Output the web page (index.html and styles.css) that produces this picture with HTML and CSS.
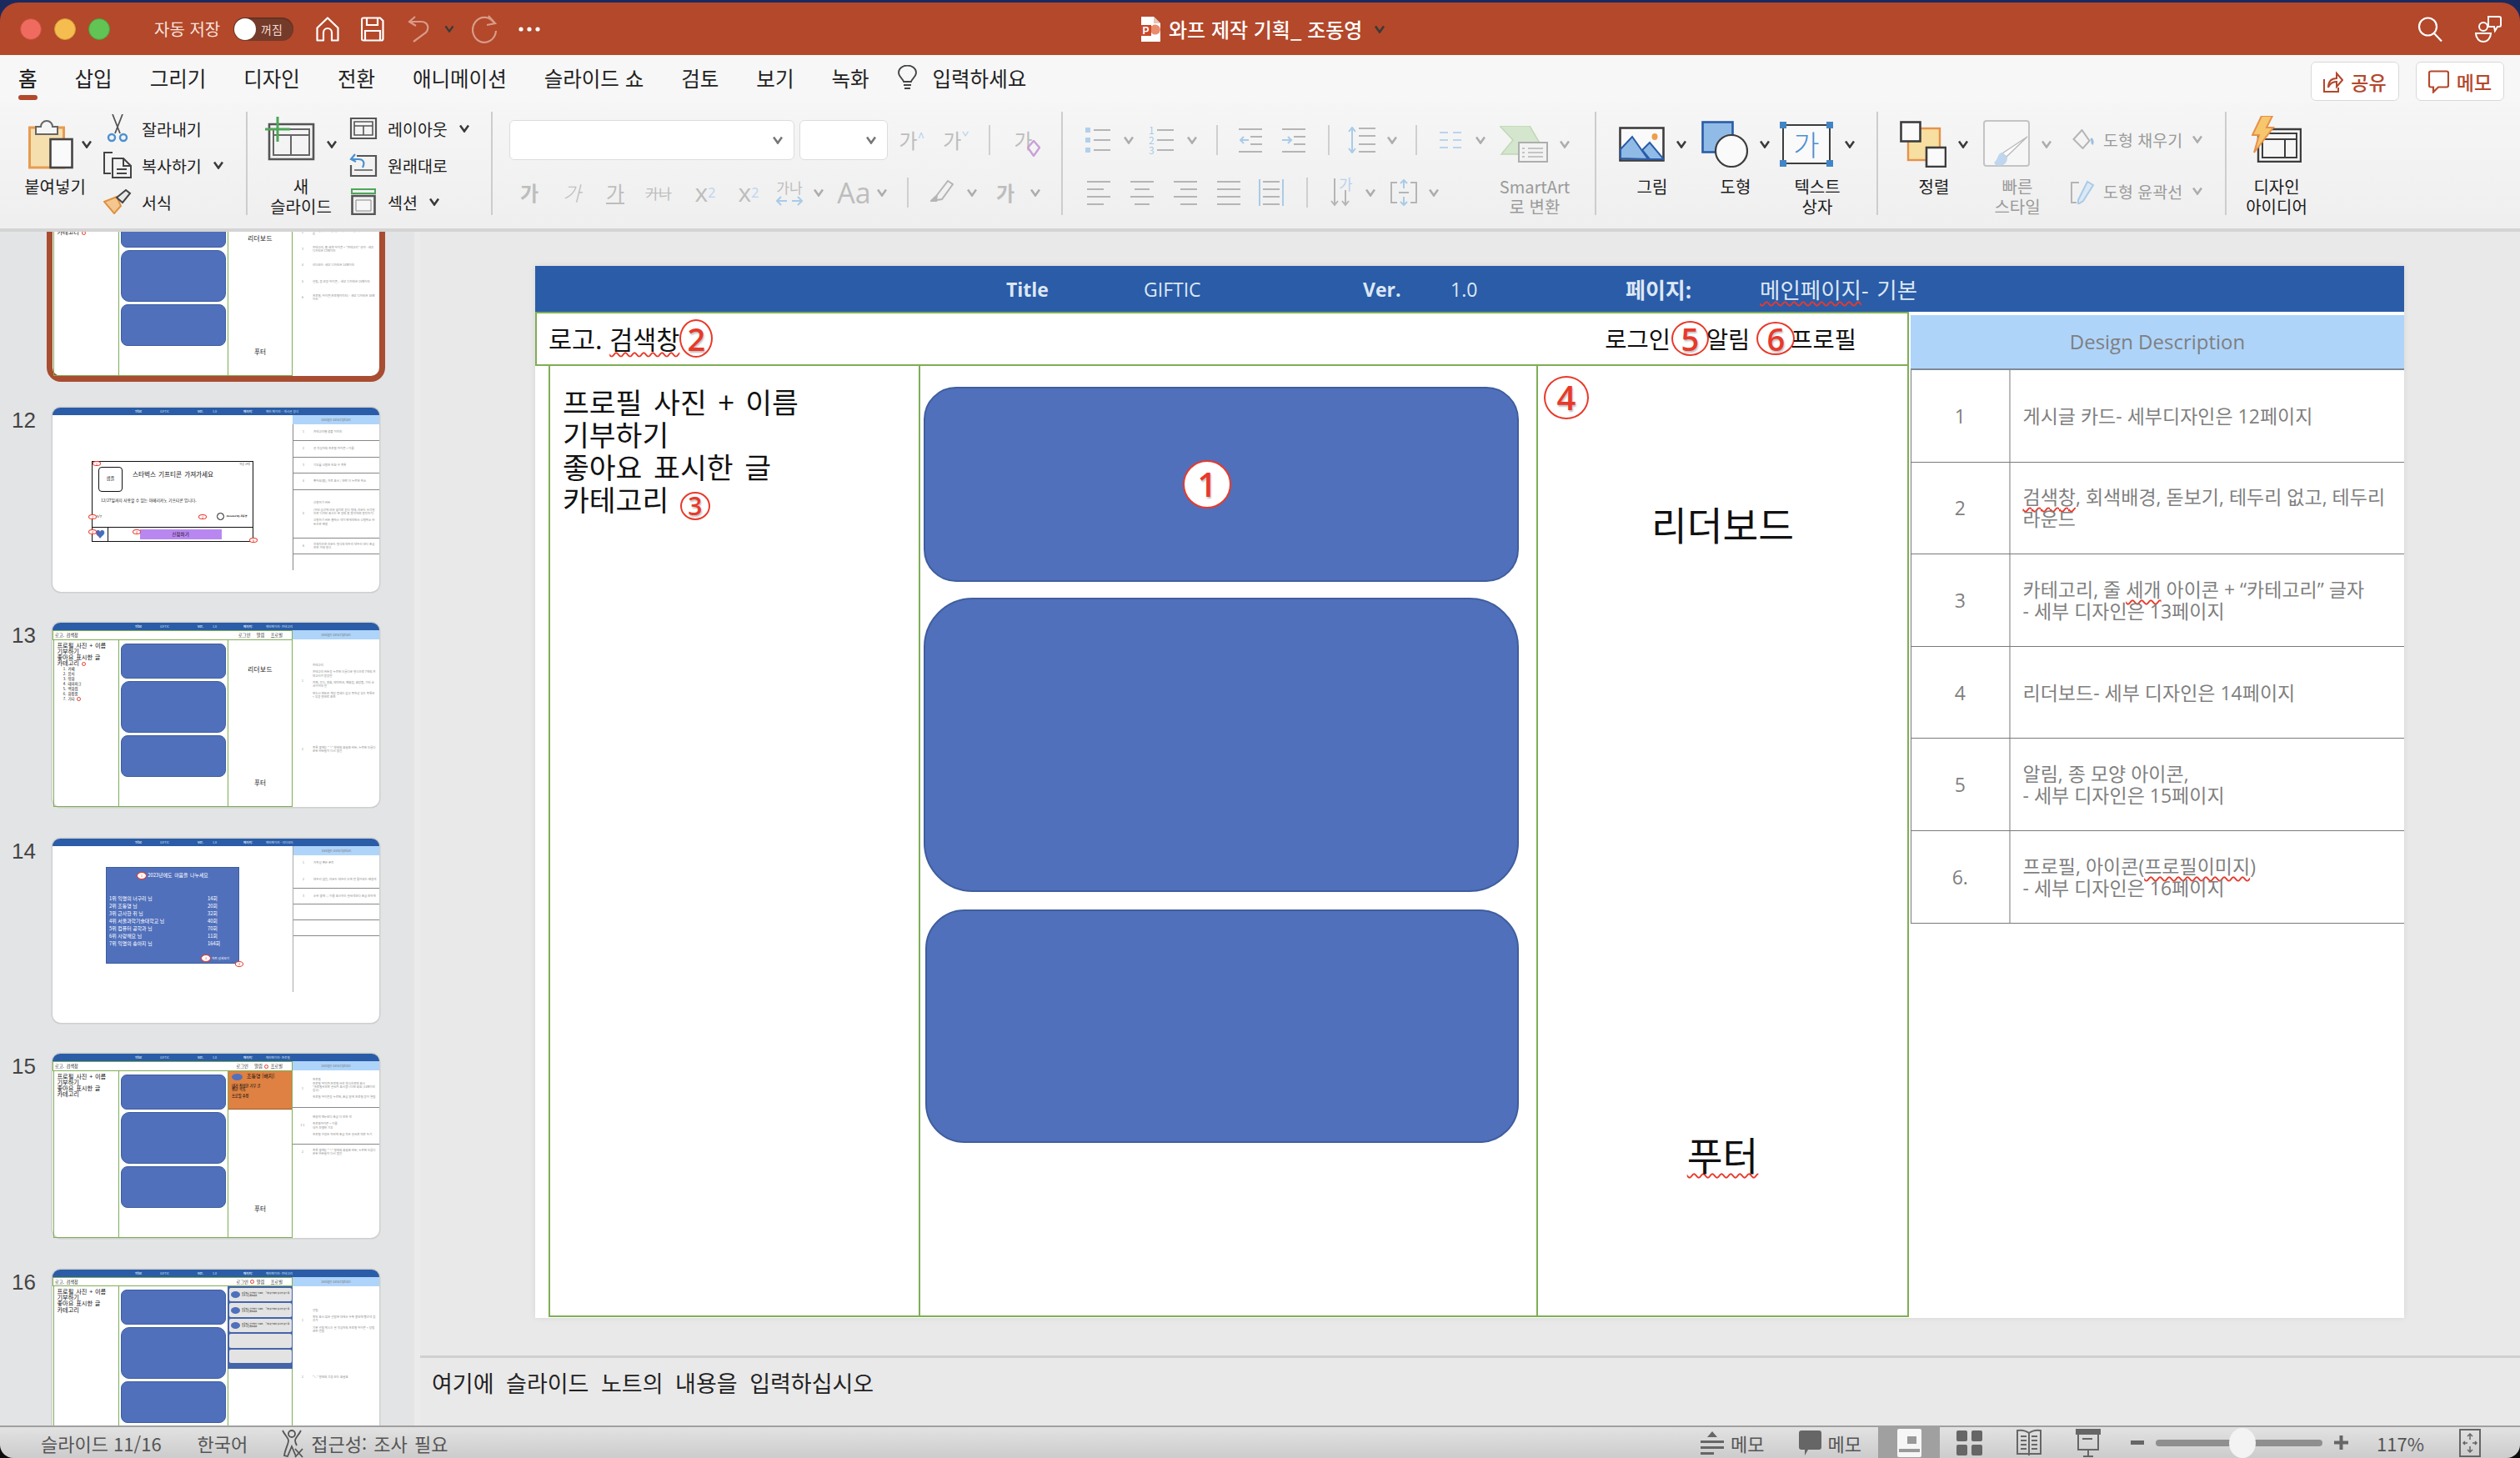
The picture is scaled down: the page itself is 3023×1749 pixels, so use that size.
FILE: index.html
```html
<!doctype html>
<html lang="ko">
  <head>
    <meta charset="utf-8" />
    <title>와프 제작 기획_ 조동영</title>
    <link rel="stylesheet" href="styles.css">
  </head>

  <body>
    <svg class="defs" width="0" height="0">
      <symbol id="chev" viewBox="0 0 12 10"><path d="M1 1.5 6 8.5 11 1.5" fill="none" stroke="currentColor" stroke-width="2.6"/></symbol>
    </svg>

    <div class="app">
      <!-- title bar -->
      <header class="titlebar">
        <span class="light light-red"></span>
        <span class="light light-yellow"></span>
        <span class="light light-green"></span>
        <span class="autosave">자동 저장</span>
        <span class="toggle"><span class="knob"></span><span class="toggle-text">꺼짐</span></span>
        <svg class="tb-home" width="28" height="30" viewBox="0 0 28 30" fill="none" stroke="#fff" stroke-width="2.2"><path d="M1.5 13.5 14 1.5l12.500 12V28.500H19V19a5 5 0 0 0-10 0v9.500H1.500Z" stroke-linejoin="round"/></svg>
        <svg class="tb-save" width="28" height="30" viewBox="0 0 28 30" fill="none" stroke="#fff" stroke-width="2.200"><path d="M3 1.500h20l3.500 3.500v21.500a2 2 0 0 1-2 2H3a2 2 0 0 1-2-2V3.500a2 2 0 0 1 2-2Z"/><path d="M7 1.500v8.500h13V1.500M5 28.500V17h18v11.500"/></svg>
        <svg class="tb-undo" width="27" height="32" viewBox="0 0 27 32" fill="none" stroke="#D99B87" stroke-width="2.200"><path d="M9 1 2 7l8 5M2 7h14c9 0 10 8 6 13L7 31"/></svg>
        <svg class="tb-undo-chev chev" width="12" height="9"><use href="#chev"/></svg>
        <svg class="tb-redo" width="31" height="34" viewBox="0 0 31 34" fill="none" stroke="#D99B87" stroke-width="2.200"><path d="M27 10A14 15 0 1 0 29 19M20 1l8 9-10 2"/></svg>
        <svg class="tb-dots" width="26" height="6" viewBox="0 0 26 6" fill="#fff"><circle cx="3" cy="3" r="2.600"/><circle cx="13" cy="3" r="2.600"/><circle cx="23" cy="3" r="2.600"/></svg>
        <svg class="tb-doc" width="24" height="30" viewBox="0 0 24 30"><path d="M1 0h15l8 8v22H1Z" fill="#fff"/><path d="M16 0l8 8h-8Z" fill="#E4C5B9"/><rect y="10" width="13" height="13" fill="#C9472B"/><text x="2.500" y="21" font-size="12" font-weight="700" fill="#fff" font-family="Liberation Sans">P</text><path d="M14 11a6 6 0 1 1-1 8v-8Z" fill="#E98C6C"/></svg>
        <span class="doc-title">와프 제작 기획_ 조동영</span>
        <svg class="tb-title-chev chev" width="16" height="10"><use href="#chev"/></svg>
        <svg class="tb-search" width="30" height="30" viewBox="0 0 30 30" fill="none" stroke="#fff" stroke-width="2.200"><circle cx="12.500" cy="12" r="10.500"/><path d="M20 20l9 9.500"/></svg>
        <svg class="tb-person" width="33" height="32" viewBox="0 0 33 32" fill="none" stroke="#fff" stroke-width="2"><circle cx="11" cy="13" r="5"/><path d="M2 21h18a9 10 0 0 1-18 0Z"/><path d="M17 1h13a2 2 0 0 1 2 2v8a2 2 0 0 1-2 2h-2l-3 5-1-5h-7Z" fill="#B3482B"/></svg>
      </header>

      <!-- ribbon -->
      <nav class="tabs">
        <span class="tab tab-active">홈</span>
        <span class="tab">삽입</span>
        <span class="tab">그리기</span>
        <span class="tab">디자인</span>
        <span class="tab">전환</span>
        <span class="tab">애니메이션</span>
        <span class="tab">슬라이드 쇼</span>
        <span class="tab">검토</span>
        <span class="tab">보기</span>
        <span class="tab">녹화</span>
        <span class="tell">
          <svg width="23" height="30" viewBox="0 0 23 30" fill="none" stroke="#444" stroke-width="1.800"><path d="M7 20c-1-4-6-6-6-11a10.500 8.500 0 0 1 21 0c0 5-5 7-6 11Z"/><path d="M7 24h9M8 28h7"/></svg>
          입력하세요
        </span>
        <span class="tab-btn tab-btn-share">
          <svg width="24" height="28" viewBox="0 0 24 28" fill="none" stroke="#B3482B" stroke-width="2"><path d="M1 11v15h17v-5"/><path d="M6 21c0-8 4-11 10-11V4l7 8-7 8v-6c-4 0-8 2-10 7Z"/></svg>
          공유
        </span>
        <span class="tab-btn">
          <svg width="25" height="28" viewBox="0 0 25 28" fill="none" stroke="#B3482B" stroke-width="2.200"><path d="M3 1.500h19a2 2 0 0 1 2 2v15a2 2 0 0 1-2 2H12l-6 6v-6H3a2 2 0 0 1-2-2v-15a2 2 0 0 1 2-2Z"/></svg>
          메모
        </span>
      </nav>

      <section class="ribbon">
        <!-- clipboard -->
        <div class="group group-clip">
          <div class="big big-paste">
            <div class="big-icon">
              <svg width="54" height="60" viewBox="0 0 54 60"><rect x="1.500" y="10" width="41" height="48" fill="#F6DFAE" stroke="#E79B4F" stroke-width="3"/><path d="M9 18V9h6a6 6 0 0 1 14 0h6v9Z" fill="#F5F5F5" stroke="#666" stroke-width="2"/><rect x="26.500" y="24" width="26" height="34" fill="#FAFAFA" stroke="#444" stroke-width="2.600"/></svg>
              <svg class="chev" width="12" height="10"><use href="#chev"/></svg>
            </div>
            <span class="big-label">붙여넣기</span>
          </div>
          <div class="rows">
            <div class="row"><svg width="34" height="34" viewBox="0 0 34 34" fill="none" stroke="#555" stroke-width="1.800"><path d="M11 0l9 23M23 0l-9 23"/><circle cx="10" cy="28" r="4" stroke="#4A90D0" stroke-width="2.400"/><circle cx="24" cy="28" r="4" stroke="#4A90D0" stroke-width="2.400"/></svg>잘라내기</div>
            <div class="row"><svg width="34" height="32" viewBox="0 0 34 32" fill="none" stroke="#444" stroke-width="2"><path d="M9 26H1V1h10"/><path d="M11 8h13l9 9v14H11ZM24 8v9h9M16 21h12M16 26h12"/></svg>복사하기<svg class="chev row-chev" width="12" height="10"><use href="#chev"/></svg></div>
            <div class="row"><svg width="34" height="30" viewBox="0 0 34 30"><path d="M1 15 16 9l5 11-8 9Z" fill="#F3C78F" stroke="#E0913F" stroke-width="2"/><path d="M16 10 27 1l5 4-9 11Z" fill="#E8E8E8" stroke="#444" stroke-width="2"/></svg>서식</div>
          </div>
        </div>

        <!-- slides -->
        <div class="group group-slides">
          <div class="big big-new big-up">
            <div class="big-icon">
              <svg width="60" height="54" viewBox="0 0 60 54" fill="none"><path d="M5 9h53v42H5Z" stroke="#555" stroke-width="2.600"/><path d="M10 15h43v31H10ZM10 22h43M31 22v24" stroke="#666" stroke-width="2"/><path d="M15 0v30M0 15h30" stroke="#4EA657" stroke-width="3"/></svg>
              <svg class="chev" width="12" height="10"><use href="#chev"/></svg>
            </div>
            <span class="big-label">새<br>슬라이드</span>
          </div>
          <div class="rows">
            <div class="row"><svg width="32" height="26" viewBox="0 0 32 26" fill="none" stroke="#555" stroke-width="2.200"><path d="M1 1h30v24H1Z"/><path d="M5 5h22v16H5ZM5 10h22M16 10v11" stroke-width="1.600"/></svg>레이아웃<svg class="chev row-chev" width="12" height="10"><use href="#chev"/></svg></div>
            <div class="row"><svg width="32" height="28" viewBox="0 0 32 28" fill="none" stroke="#555" stroke-width="2.200"><path d="M8 3h23v24H1V14"/><path d="M5 20h22" stroke-width="1.400"/><path d="M6 1 1 7l6 3M2 7h8c6 0 8 4 5 10" stroke="#4A90D0"/></svg>원래대로</div>
            <div class="row"><svg width="30" height="32" viewBox="0 0 30 32" fill="none"><path d="M1 1h28v5H1Z" stroke="#4EA657" stroke-width="2"/><path d="M1.500 9h27v22h-27Z" stroke="#555" stroke-width="2.600"/><path d="M6 14h18v13H6Z" fill="#F6F6F6" stroke="#888" stroke-width="1"/></svg>섹션<svg class="chev row-chev" width="12" height="10"><use href="#chev"/></svg></div>
          </div>
        </div>

        <!-- font -->
        <div class="group group-font">
          <div class="tool-row">
            <span class="select select-font ml20"><svg class="chev" width="12" height="10"><use href="#chev"/></svg></span>
            <span class="select select-size ml6"><svg class="chev" width="12" height="10"><use href="#chev"/></svg></span>
            <span class="glyph g32 ml13">가<sup class="up">^</sup></span>
            <span class="glyph g28 ml23">가<sup class="up">ˇ</sup></span>
            <span class="vsep ml25"></span>
            <span class="glyph g33 ml23 erase">가
              <svg width="16" height="20" viewBox="0 0 16 20" fill="none" stroke="#C9A0D8" stroke-width="2.400"><path d="M8 1l7 8-7 10-7-10Z"/></svg>
            </span>
          </div>
          <div class="tool-row tool-row-2">
            <span class="glyph g20 ml34 bold">가</span>
            <span class="glyph g18 ml32 italic">가</span>
            <span class="glyph g20 ml33 under">가</span>
            <span class="glyph g32 ml26 strike small">가나</span>
            <span class="glyph g22 ml29 latin">x<sup>2</sup></span>
            <span class="glyph g22 ml30 latin">x<sub>2</sub></span>
            <span class="glyph g32 ml22 spacing">가나<svg width="32" height="12" viewBox="0 0 32 12" fill="none" stroke="#A9CBE8" stroke-width="2"><path d="M13 6H2M6 1 1 6l5 5M19 6h11M26 1l5 5-5 5"/></svg></span>
            <svg class="chev off ml13" width="12" height="10"><use href="#chev"/></svg>
            <span class="glyph g33 ml20 latin aa">Aa</span>
            <svg class="chev off ml11" width="12" height="10"><use href="#chev"/></svg>
            <span class="vsep ml24"></span>
            <svg class="ml26" width="28" height="32" viewBox="0 0 28 32" fill="none" stroke="#B5B5B5" stroke-width="2"><path d="M8 19 21 2l6 4-13 18-7 1Z"/><path d="M7 26H1l5-5Z" fill="#B5B5B5"/></svg>
            <svg class="chev off ml16" width="12" height="10"><use href="#chev"/></svg>
            <span class="glyph g22 ml23 bold">가</span>
            <svg class="chev off ml19" width="12" height="10"><use href="#chev"/></svg>
          </div>
        </div>

        <!-- paragraph -->
        <div class="group group-para">
          <div class="para-stack">
            <div class="tool-row">
              <svg class="ml27" width="30" height="30" viewBox="0 0 30 30" stroke="#B5B5B5" stroke-width="2"><path d="M10 3h20M10 15h20M10 27h20"/><path d="M0 0h6v6H0ZM0 12h6v6H0ZM0 24h6v6H0Z" fill="#B2D0EC" stroke="none"/></svg>
              <svg class="chev off ml16" width="12" height="10"><use href="#chev"/></svg>
              <span class="list-num ml18"><span class="list-digits">1<br>2<br>3</span><svg width="20" height="30" viewBox="0 0 20 30" stroke="#B5B5B5" stroke-width="2"><path d="M0 3h20M0 15h20M0 27h20"/></svg></span>
              <svg class="chev off ml16" width="12" height="10"><use href="#chev"/></svg>
              <span class="vsep ml23"></span>
              <svg class="ml25" width="30" height="30" viewBox="0 0 30 30" fill="none" stroke="#B5B5B5" stroke-width="2"><path d="M0 2h28M14 11h14M14 20h14M0 29h28"/><path d="M12 15H2M6 11l-4 4 4 4" stroke="#A9CBE8"/></svg>
              <svg class="ml22" width="28" height="30" viewBox="0 0 28 30" fill="none" stroke="#B5B5B5" stroke-width="2"><path d="M0 2h28M14 11h14M14 20h14M0 29h28"/><path d="M0 15h10M7 11l4 4-4 4" stroke="#A9CBE8"/></svg>
              <span class="vsep ml27"></span>
              <svg class="ml22" width="33" height="32" viewBox="0 0 33 32" fill="none" stroke="#B5B5B5" stroke-width="2"><path d="M13 2h20M13 11h20M13 21h20M13 30h20"/><path d="M5 2v28M1 6l4-5 4 5M1 26l4 5 4-5" stroke="#A9CBE8"/></svg>
              <svg class="chev off ml14" width="12" height="10"><use href="#chev"/></svg>
              <span class="vsep ml22"></span>
              <svg class="ml27" width="26" height="22" viewBox="0 0 26 22" stroke="#B9D4EE" stroke-width="2"><path d="M0 2h10M0 11h10M0 20h10M16 2h10M16 11h10M16 20h10"/></svg>
              <svg class="chev off ml17" width="12" height="10"><use href="#chev"/></svg>
            </div>
            <div class="tool-row tool-row-2">
              <svg class="ml29" width="28" height="30" viewBox="0 0 28 30" stroke="#B5B5B5" stroke-width="2"><path d="M0 2h28M0 11h20M0 20h28M0 29h20"/></svg>
              <svg class="ml24" width="28" height="30" viewBox="0 0 28 30" stroke="#B5B5B5" stroke-width="2"><path d="M0 2h28M5 11h18M0 20h28M5 29h18"/></svg>
              <svg class="ml24" width="28" height="30" viewBox="0 0 28 30" stroke="#B5B5B5" stroke-width="2"><path d="M0 2h28M8 11h20M0 20h28M8 29h20"/></svg>
              <svg class="ml24" width="28" height="30" viewBox="0 0 28 30" stroke="#B5B5B5" stroke-width="2"><path d="M0 2h28M0 11h28M0 20h28M0 29h28"/></svg>
              <svg class="ml22" width="30" height="32" viewBox="0 0 30 32" fill="none" stroke="#B5B5B5" stroke-width="2"><path d="M5 3h20M5 12h20M5 21h20M5 30h20"/><path d="M1 0v32M29 0v32" stroke="#A9CBE8"/></svg>
              <span class="vsep ml27"></span>
              <span class="text-dir ml27">
                <svg width="26" height="34" viewBox="0 0 26 34" fill="none" stroke="#B5B5B5" stroke-width="2"><path d="M5 0v32M1 27l4 5 4-5M18 14v18M14 27l4 5 4-5"/></svg>
                <span class="text-dir-glyph">가</span>
              </span>
              <svg class="chev off ml16" width="12" height="10"><use href="#chev"/></svg>
              <svg class="ml18" width="32" height="32" viewBox="0 0 32 32" fill="none" stroke="#B5B5B5" stroke-width="2"><path d="M8 4H1v24h7M24 4h7v24h-7M10 16h12"/><path d="M16 1v10M12 5l4-4 4 4M16 21v10M12 27l4 4 4-4" stroke="#A9CBE8"/></svg>
              <svg class="chev off ml14" width="12" height="10"><use href="#chev"/></svg>
            </div>
          </div>
          <div class="big big-smart off-text">
            <div class="big-icon">
              <svg width="58" height="44" viewBox="0 0 58 44"><path d="M0 0h36l14 24v10H20L2 34l14-17Z" fill="#D5E6CE" stroke="#BFD8B4" stroke-width="1.500"/><rect x="23" y="20" width="34" height="23" fill="#F2F2F2" stroke="#AEAEAE" stroke-width="2"/><path d="M34 27h18M34 32h18M34 37h18M27 27h3M27 32h3M27 37h3" stroke="#B5B5B5" stroke-width="1.500"/></svg>
              <svg class="chev off" width="12" height="10"><use href="#chev"/></svg>
            </div>
            <span class="big-label">SmartArt<br>로 변환</span>
          </div>
        </div>

        <!-- insert -->
        <div class="group group-insert">
          <div class="big big-w100">
            <div class="big-icon">
              <svg width="55" height="42" viewBox="0 0 55 42"><rect x="1.500" y="1.500" width="52" height="39" fill="#FAFAFA" stroke="#3D3D3D" stroke-width="2.600"/><path d="M2 38V27L16 12l19 27Z" fill="#8FBBE6" stroke="#2A5CA8" stroke-width="2"/><path d="M28 28l9-9 16 19v1H37Z" fill="#8FBBE6" stroke="#2A5CA8" stroke-width="2"/><ellipse cx="43" cy="12" rx="3.500" ry="4" fill="#ED9F4C"/></svg>
              <svg class="chev" width="12" height="10"><use href="#chev"/></svg>
            </div>
            <span class="big-label">그림</span>
          </div>
          <div class="big big-w100">
            <div class="big-icon">
              <svg width="56" height="56" viewBox="0 0 56 56"><rect x="1.500" y="1.500" width="36" height="36" fill="#8FBBE6" stroke="#2A5CA8" stroke-width="2.600"/><ellipse cx="36" cy="36" rx="19" ry="19" fill="#FAFAFA" stroke="#3D3D3D" stroke-width="2.200"/></svg>
              <svg class="chev" width="12" height="10"><use href="#chev"/></svg>
            </div>
            <span class="big-label">도형</span>
          </div>
          <div class="big big-w96">
            <div class="big-icon">
              <span class="textbox-icon">가<i class="hd hd1"></i><i class="hd hd2"></i><i class="hd hd3"></i><i class="hd hd4"></i></span>
              <svg class="chev" width="12" height="10"><use href="#chev"/></svg>
            </div>
            <span class="big-label">텍스트<br>상자</span>
          </div>
        </div>

        <!-- drawing -->
        <div class="group group-draw">
          <div class="big big-w100">
            <div class="big-icon">
              <svg width="56" height="56" viewBox="0 0 56 56"><rect x="10" y="9" width="38" height="38" fill="#F6DFA0" stroke="#E7914A" stroke-width="2.400"/><rect x="1.500" y="1.500" width="23" height="23" fill="#FAFAFA" stroke="#3D3D3D" stroke-width="2.600"/><rect x="32" y="32" width="23" height="23" fill="#FAFAFA" stroke="#3D3D3D" stroke-width="2.600"/></svg>
              <svg class="chev" width="12" height="10"><use href="#chev"/></svg>
            </div>
            <span class="big-label">정렬</span>
          </div>
          <div class="big big-w100 off-text">
            <div class="big-icon">
              <svg width="56" height="58" viewBox="0 0 56 58" fill="none"><rect x="1" y="1" width="54" height="54" rx="3" fill="#F6F6F6" stroke="#C4C4C4" stroke-width="2"/><path d="M53 20 28 44l-5-4Z" fill="#fff" stroke="#BBB" stroke-width="1.500"/><path d="M15 54c6 2 14 0 14-9l-6-6c-6 0-5 9-10 12Z" fill="#BFD6EE"/></svg>
              <svg class="chev off" width="12" height="10"><use href="#chev"/></svg>
            </div>
            <span class="big-label">빠른<br>스타일</span>
          </div>
          <div class="rows rows-shape">
            <div class="row"><svg width="25" height="24" viewBox="0 0 25 24" fill="none" stroke="#B5B5B5" stroke-width="2"><path d="M1 12 11 1l9 13-8 9Z"/><path d="M22 11c2 3 2 6 1 7" stroke="#9BBFE2" stroke-width="3"/></svg>도형 채우기<svg class="chev off row-chev" width="12" height="10"><use href="#chev"/></svg></div>
            <div class="row"><svg width="30" height="32" viewBox="0 0 30 32" fill="none" stroke="#B5B5B5" stroke-width="2"><path d="M10 6H1v24h6"/><path d="M9 27 20 5l7 4-12 19-6 4Z" stroke="#A9CBE8" fill="#DCE9F5"/></svg>도형 윤곽선<svg class="chev off row-chev" width="12" height="10"><use href="#chev"/></svg></div>
          </div>
        </div>

        <!-- designer -->
        <div class="group group-design">
          <div class="big big-w120 big-up">
            <div class="big-icon">
              <svg width="60" height="56" viewBox="0 0 60 56" fill="none"><path d="M8 16h51v39H8Z" stroke="#3D3D3D" stroke-width="2.400"/><path d="M13 21h41v29H13ZM13 28h41M40 28v22" stroke="#3D3D3D" stroke-width="2" fill="#F6F6F6"/><path d="M12 0h13l-7 14h8L3 44l6-21H1Z" fill="#F6C76C" stroke="#E7914A" stroke-width="2"/></svg>
            </div>
            <span class="big-label">디자인<br>아이디어</span>
          </div>
        </div>
      </section>

      <div class="workspace">
        <!-- thumbnails -->
        <aside class="sidebar">
          <div class="thumbs">
            <div class="thumb-item">
              <span class="thumb-num">11</span>
              <div class="mini mini-selected">
                <div class="mini-head"><span>Title</span><span>GIFTIC</span><span>Ver.</span><span>1.0</span><span>페이지:</span><span>메인페이지- 기본</span></div>
                <div class="mini-page">
                  <div class="mini-nav"><span>로고. 검색창</span><span class="mini-nav-right">로그인 &nbsp; 알림 &nbsp; 프로필</span></div>
                  <div class="mini-body">
                    <div class="mini-left">프로필 사진 + 이름<br>기부하기<br>좋아요 표시한 글<br>카테고리 <i class="dot"></i></div>
                    <div class="mini-center"><i class="mini-card c1"></i><i class="mini-card c2"></i><i class="mini-card c3"></i></div>
                    <div class="mini-right"><span class="mini-board">리더보드</span><span class="mini-foot">푸터</span></div>
                  </div>
                </div>
                <div class="mini-desc">
                  <div class="mini-desc-head">Design Description</div>
                  <div class="mini-row"><b>1</b><span>게시글 카드- 세부디자인은 12페이지</span></div>
                  <div class="mini-row"><b>2</b><span>검색창, 회색배경, 돋보기, 테두리 없고, 테두리 라운드</span></div>
                  <div class="mini-row"><b>3</b><span>카테고리, 줄 세개 아이콘 + “카테고리” 글자 - 세부 디자인은 13페이지</span></div>
                  <div class="mini-row"><b>4</b><span>리더보드- 세부 디자인은 14페이지</span></div>
                  <div class="mini-row"><b>5</b><span>알림, 종 모양 아이콘, - 세부 디자인은 15페이지</span></div>
                  <div class="mini-row"><b>6</b><span>프로필, 아이콘(프로필이미지) - 세부 디자인은 16페이지</span></div>
                </div>
              </div>
            </div>

            <div class="thumb-item">
              <span class="thumb-num">12</span>
              <div class="mini">
                <div class="mini-head"><span>Title</span><span>GIFTIC</span><span>Ver.</span><span>1.0</span><span>페이지:</span><span>메인 페이지 – 게시글 양식</span></div>
                <div class="mini-page mini-free">
                  <div class="post">
                    <div class="post-main">
                      <span class="post-count">마감 14명</span>
                      <div class="post-top"><span class="post-sample">샘플</span><span class="post-title">스타벅스 기프티콘 가져가세요</span></div>
                      <p class="post-text">12/27일까지 사용할 수 있는 아메리카노 기프티콘 입니다.</p>
                      <div class="post-meta"><span>5/7</span><span class="post-by"><i class="post-avatar"></i><em>Donated By 조동영</em></span></div>
                    </div>
                    <div class="post-bar"><span class="post-heart">♥</span><span class="post-apply"><span>신청하기</span></span></div>
                    <i class="pin pin1">1</i><i class="pin pin2">2</i><i class="pin pin3">3</i><i class="pin pin4">4</i><i class="pin pin5">4</i><i class="pin pin6">6</i>
                  </div>
                </div>
                <div class="mini-desc mini-desc-lined">
                  <div class="mini-desc-head">Design Description</div>
                  <div class="mini-row"><b>1</b><span>카테고리별 샘플 이미지</span></div>
                  <div class="mini-row"><b>2</b><span>글 작성자의 프로필 아이콘 + 이름</span></div>
                  <div class="mini-row"><b>3</b><span>기부를 신청한 인원 수 목록</span></div>
                  <div class="mini-row"><b>4</b><span>좋아요(찜), 하트 표시 / 한번 더 누르면 취소</span></div>
                  <div class="mini-row mini-row-tall"><b>5</b><span>신청하기 버튼<br><br>(하단 공간에 여유 넓이로 길다 형태, 라운드 사각형으로 디자인 표시는 본 장의 중 동작하며 동작하기)<br><br>신청하기 버튼 클릭시 색이 변해지면서 신청취소 버튼으로 변경</span></div>
                  <div class="mini-row"><b>6</b><span>전체적으로 라운드 형식의 테두리 테두리 보다 조금 진한 가의 형식</span></div>
                  <div class="mini-row"></div>
                </div>
              </div>
            </div>

            <div class="thumb-item">
              <span class="thumb-num">13</span>
              <div class="mini">
                <div class="mini-head"><span>Title</span><span>GIFTIC</span><span>Ver.</span><span>1.0</span><span>페이지:</span><span>메인페이지- 카테고리</span></div>
                <div class="mini-page">
                  <div class="mini-nav"><span>로고. 검색창</span><span class="mini-nav-right">로그인 &nbsp; 알림 &nbsp; 프로필</span></div>
                  <div class="mini-body">
                    <div class="mini-left">프로필 사진 + 이름<br>기부하기<br>좋아요 표시한 글<br>카테고리 <i class="dot"></i>
                      <ol class="mini-cats"><li>카페</li><li>음식</li><li>영화</li><li>테마파크</li><li>백화점</li><li>화장품</li><li>기타 <i class="dot"></i></li></ol>
                    </div>
                    <div class="mini-center"><i class="mini-card c1"></i><i class="mini-card c2"></i><i class="mini-card c3"></i></div>
                    <div class="mini-right"><span class="mini-board">리더보드</span><span class="mini-foot">푸터</span></div>
                  </div>
                </div>
                <div class="mini-desc">
                  <div class="mini-desc-head">Design Description</div>
                  <div class="mini-row mini-row-pad"><b>1</b><span>카테고리<br><br>카테고리 버튼을 누르면 드롭다운 형식으로 7개의 카테고리가 등장함<br><br>카페, 음식, 영화, 테마파크, 백화점, 화장품, 기타 순서이어야 함<br><br>한눈시 만든은 개당 명세는 없고 목차상 있는 목록은 + 있을 형태로 표현</span></div>
                  <div class="mini-row mini-row-pad2"><b>2</b><span>목록 옆에는 “ㄱ” 형태의 화살표 버튼, 누르면 드롭다운된 버튼들이 다시 접힘</span></div>
                </div>
              </div>
            </div>

            <div class="thumb-item">
              <span class="thumb-num">14</span>
              <div class="mini">
                <div class="mini-head"><span>Title</span><span>GIFTIC</span><span>Ver.</span><span>1.0</span><span>페이지:</span><span>메인페이지 - 리더보드</span></div>
                <div class="mini-page mini-free">
                  <div class="board">
                    <div class="board-title"><i class="pin-static">1</i>2023년에도 마음을 나누세요</div>
                    <div class="board-list">
                      <span>1위 익명의 너구리 님</span><span>14회</span>
                      <span>2위 조동영 님</span><span>20회</span>
                      <span>3위 근사한 쥐 님</span><span>32회</span>
                      <span>4위 서울과학기술대학교 님</span><span>40회</span>
                      <span>5위 컴퓨터 공학과 님</span><span>70회</span>
                      <span>6위 사랑해요 님</span><span>11회</span>
                      <span>7위 익명의 송아지 님</span><span>164회</span>
                    </div>
                    <div class="board-foot"><i class="pin-static">3</i>차트 상세보기</div>
                    <i class="pin pin-board">2</i>
                  </div>
                </div>
                <div class="mini-desc mini-desc-open">
                  <div class="mini-desc-head">Design Description</div>
                  <div class="mini-row"><b>1</b><span>가독성 좋은 폰트</span></div>
                  <div class="mini-row"><b>2</b><span>테두리 없음, 라운드 테두리 눈에 잘 들어오는 배경색</span></div>
                  <div class="mini-row mini-row-line"><b>3</b><span>순위 옆에 ○ 이름 표시하는 글씨색보다 조금 진하게</span></div>
                  <div class="mini-row mini-row-line mini-row-short"></div>
                  <div class="mini-row mini-row-line mini-row-short"></div>
                  <div class="mini-row mini-row-line mini-row-short"></div>
                </div>
              </div>
            </div>

            <div class="thumb-item">
              <span class="thumb-num">15</span>
              <div class="mini">
                <div class="mini-head"><span>Title</span><span>GIFTIC</span><span>Ver.</span><span>1.0</span><span>페이지:</span><span>메인페이지- 프로필</span></div>
                <div class="mini-page">
                  <div class="mini-nav"><span>로고. 검색창</span><span class="mini-nav-right">로그인 &nbsp; 알림 <i class="dot"></i> 프로필</span></div>
                  <div class="mini-body">
                    <div class="mini-left">프로필 사진 + 이름<br>기부하기<br>좋아요 표시한 글<br>카테고리</div>
                    <div class="mini-center"><i class="mini-card c1"></i><i class="mini-card c2"></i><i class="mini-card c3"></i></div>
                    <div class="mini-right">
                      <div class="profile">
                        <div class="profile-name"><i></i>조동영 [배지]</div>
                        <p>내가 작성한 기부 글<br>찜한 목록</p>
                        <p>프로필 수정</p>
                      </div>
                      <span class="mini-foot mini-foot-low">푸터</span>
                    </div>
                  </div>
                </div>
                <div class="mini-desc">
                  <div class="mini-desc-head">Design Description</div>
                  <div class="mini-row mini-row-tall2"><b>1</b><span>프로필<br>프로필 아이콘(프로필 사진 형식으로만 표시<br>*프로필사진은 글씨가 표시됩니다만 회원 (14페이지 참고)<br><br>프로필 아이콘을 누르면, 조금 밑에 프로필 창이 열림</span></div>
                  <div class="mini-row mini-row-tall2 mini-row-line"><b>1-1</b><span>배경색 메뉴보다 조금 더 진한 색<br><br>프로필아이콘 + 이름<br>내가 진행한 기부<br><br>프로필 수정은 하단에 조금 작은 글씨로 따로 두기</span></div>
                  <div class="mini-row mini-row-line"><b>2</b><span>목록 옆에는 “ㄱ” 형태의 화살표 버튼, 누르면 드롭다운된 버튼들이 다시 접힘</span></div>
                </div>
              </div>
            </div>

            <div class="thumb-item">
              <span class="thumb-num">16</span>
              <div class="mini">
                <div class="mini-head"><span>Title</span><span>GIFTIC</span><span>Ver.</span><span>1.0</span><span>페이지:</span><span>메인페이지- 카테고리</span></div>
                <div class="mini-page">
                  <div class="mini-nav"><span>로고. 검색창</span><span class="mini-nav-right">로그인 <i class="dot"></i> 알림 &nbsp; 프로필</span></div>
                  <div class="mini-body">
                    <div class="mini-left">프로필 사진 + 이름<br>기부하기<br>좋아요 표시한 글<br>카테고리</div>
                    <div class="mini-center"><i class="mini-card c1"></i><i class="mini-card c2"></i><i class="mini-card c3"></i></div>
                    <div class="mini-right">
                      <div class="alerts">
                        <div class="alert"><i></i><span>조동영님 신청하신 기프티... 글에 당첨되어 당사자 당첨 목록을 확인해주세요.</span></div>
                        <div class="alert"><i></i><span>조동영님 신청하신 기프티... 글에 당첨되어 당사자 당첨 목록을 확인해주세요.</span></div>
                        <div class="alert"><i></i><span>조동영님 신청하신 기프티... 글에 당첨되어 당사자 당첨 목록을 확인해주세요.</span></div>
                        <div class="alert alert-empty"></div>
                        <div class="alert alert-empty"></div>
                      </div>
                    </div>
                  </div>
                </div>
                <div class="mini-desc">
                  <div class="mini-desc-head">Design Description</div>
                  <div class="mini-row mini-row-pad3"><b>1</b><span>알림<br><br>확인 표시 않은 알림에 대해서 우측 중단에 빨간색 점 추가<br><br>기본 알림 박스는 글 작성자의 프로필 아이콘 + 당첨 관련 알림</span></div>
                  <div class="mini-row mini-row-pad2"><b>2</b><span>“ㄴ” 형태의 각종 보는 화살표</span></div>
                </div>
              </div>
            </div>
          </div>
        </aside>

        <div class="editor">
          <main class="canvas">
            <!-- slide -->
            <div class="slide">
              <div class="slide-head">
                <span class="sh-title">Title</span>
                <span class="sh-app">GIFTIC</span>
                <span class="sh-ver">Ver.</span>
                <span class="sh-vernum">1.0</span>
                <span class="sh-page">페이지:</span>
                <span class="sh-pagename"><span class="typo">메인페이지</span>- 기본</span>
              </div>

              <div class="page">
                <div class="page-nav">
                  <span class="nav-left">로고. <span class="typo">검색창</span><span class="mark mark-2">2</span></span>
                  <span class="nav-right">로그인<span class="mark mark-5">5</span>알림<span class="mark mark-6">6</span>프로필</span>
                </div>
                <div class="page-body">
                  <div class="col-left">
                    프로필 사진 + 이름<br>
                    기부하기<br>
                    좋아요 표시한 글<br>
                    카테고리 <span class="mark mark-3">3</span>
                  </div>
                  <div class="col-center">
                    <div class="card card-1"><span class="mark mark-1">1</span></div>
                    <div class="card card-2"></div>
                    <div class="card card-3"></div>
                  </div>
                  <div class="col-right">
                    <span class="mark mark-4">4</span>
                    <span class="board-label">리더보드</span>
                    <span class="foot-label"><span class="typo">푸터</span></span>
                  </div>
                </div>
              </div>

              <div class="desc">
                <div class="desc-head">Design Description</div>
                <div class="desc-row"><span class="desc-num">1</span><span class="desc-text">게시글 카드- 세부디자인은 12페이지</span></div>
                <div class="desc-row"><span class="desc-num">2</span><span class="desc-text"><span class="typo">검색창</span>, 회색배경, 돋보기, 테두리 없고, 테두리 라운드</span></div>
                <div class="desc-row"><span class="desc-num">3</span><span class="desc-text">카테고리, 줄 <span class="typo">세개</span> 아이콘 + “카테고리” 글자<br>- 세부 디자인은 13페이지</span></div>
                <div class="desc-row"><span class="desc-num">4</span><span class="desc-text">리더보드- 세부 디자인은 14페이지</span></div>
                <div class="desc-row"><span class="desc-num">5</span><span class="desc-text">알림, 종 모양 아이콘,<br>- 세부 디자인은 15페이지</span></div>
                <div class="desc-row"><span class="desc-num">6.</span><span class="desc-text">프로필, 아이콘(<span class="typo">프로필이미지</span>)<br>- 세부 디자인은 16페이지</span></div>
              </div>
            </div>
          </main>
          <div class="notes">여기에 슬라이드 노트의 내용을 입력하십시오</div>
        </div>
      </div>

      <!-- status bar -->
      <footer class="status">
        <span>슬라이드 11/16</span>
        <span class="st-lang">한국어</span>
        <svg class="st-access" width="27" height="36" viewBox="0 0 27 36" fill="none" stroke="#555" stroke-width="1.800"><circle cx="13" cy="7" r="4"/><path d="M2 3c3 6 7 9 7 12 0 5-4 10-5 18l4 1 5-12 5 12M24 3c-3 6-7 9-7 12 0 2 1 4 2 6"/><path d="M17 25l9 10M26 25l-9 10"/></svg>
        <span class="st-check">접근성: 조사 필요</span>
        <span class="st-right">
          <svg width="28" height="28" viewBox="0 0 28 28" fill="#666"><path d="M14 0l6 7H8Z"/><path d="M0 11h28v3H0ZM0 18h28v3H0ZM0 25h16v3H0Z"/></svg>
          <span class="st-memo">메모</span>
          <svg class="ml41" width="27" height="30" viewBox="0 0 27 30" fill="#666"><path d="M3 0h21a3 3 0 0 1 3 3v17a3 3 0 0 1-3 3H11l-4 7v-7H3a3 3 0 0 1-3-3V3a3 3 0 0 1 3-3Z"/></svg>
          <span class="st-memo">메모</span>
          <span class="view-active ml20">
            <svg width="29" height="34" viewBox="0 0 29 34"><rect width="29" height="34" rx="2" fill="#F6F6F6"/><rect x="12" y="9" width="11" height="9" fill="#999"/><rect x="2" y="24" width="25" height="4" fill="#999"/></svg>
          </span>
          <svg class="ml20" width="31" height="30" viewBox="0 0 31 30" fill="#666"><rect width="13" height="13" rx="2"/><rect x="18" width="13" height="13" rx="2"/><rect y="17" width="13" height="13" rx="2"/><rect x="18" y="17" width="13" height="13" rx="2"/></svg>
          <svg class="ml41" width="30" height="34" viewBox="0 0 30 34" fill="none" stroke="#666" stroke-width="2"><path d="M1 2c6-1 10 0 14 3 4-3 8-4 14-3v28H1ZM15 5v27M5 9h7M5 14h7M5 19h7M5 24h7M18 9h7M18 14h7M18 19h7M18 24h7"/></svg>
          <svg class="ml41" width="30" height="34" viewBox="0 0 30 34" fill="none" stroke="#666" stroke-width="2"><path d="M3 3h24v22H3ZM15 25v8M9 33h12M8 12h12"/><path d="M1 1h28v5H1Z" fill="#666"/></svg>
          <span class="zoom-minus ml36"></span>
          <span class="slider ml14"><span class="slider-knob"></span></span>
          <svg class="ml14" width="17" height="17" viewBox="0 0 17 17" fill="#666"><path d="M6.500 0h4v6.500H17v4h-6.500V17h-4v-6.500H0v-4h6.500Z"/></svg>
          <span class="st-zoom">117%</span>
          <svg class="ml42" width="26" height="34" viewBox="0 0 26 34" fill="none" stroke="#666" stroke-width="2"><rect x="1" y="1" width="24" height="32"/><path d="M13 6v7M10 9l3-3 3 3M13 28v-7M10 25l3 3 3-3M5 17h5M7 15l-2 2 2 2M21 17h-5M19 15l2 2-2 2" stroke-width="1.500"/></svg>
        </span>
      </footer>
    </div>
  </body>
</html>
```

FILE: styles.css
```css
html,
body {
  margin: 0;
  padding: 0;
  width: 3023px;
  height: 1749px;
  overflow: hidden;
  background: linear-gradient(#1b2a5e 0, #1b2a5e 40px, #0c0c0c 1700px);
  font-family: "Noto Sans CJK KR", "Noto Sans", sans-serif;
  color: #222;
}
.defs {
  position: absolute;
}
.app {
  margin-top: 3px;
  height: 1746px;
  display: flex;
  flex-direction: column;
  border-radius: 22px 22px 16px 16px;
  overflow: hidden;
}

/* spacing helpers */
.ml6 { margin-left: 6px; }
.ml11 { margin-left: 11px; }
.ml13 { margin-left: 13px; }
.ml14 { margin-left: 14px; }
.ml16 { margin-left: 16px; }
.ml17 { margin-left: 17px; }
.ml18 { margin-left: 18px; }
.ml19 { margin-left: 19px; }
.ml20 { margin-left: 20px; }
.ml22 { margin-left: 22px; }
.ml23 { margin-left: 23px; }
.ml24 { margin-left: 24px; }
.ml25 { margin-left: 25px; }
.ml26 { margin-left: 26px; }
.ml27 { margin-left: 27px; }
.ml29 { margin-left: 29px; }
.ml30 { margin-left: 30px; }
.ml32 { margin-left: 32px; }
.ml33 { margin-left: 33px; }
.ml34 { margin-left: 34px; }
.ml36 { margin-left: 36px; }
.ml41 { margin-left: 41px; }
.ml42 { margin-left: 42px; }

/* title bar */
.titlebar {
  flex: none;
  height: 63px;
  background: #b3482b;
  color: #fff;
  display: flex;
  align-items: center;
  padding-left: 24px;
  padding-right: 22px;
}
.light {
  width: 26px;
  height: 26px;
  border-radius: 50%;
  margin-right: 15px;
  box-sizing: border-box;
}
.light-red { background: #ef6b60; border: 1px solid #c9503f; }
.light-yellow { background: #f5bd4f; border: 1px solid #cf9a33; }
.light-green { background: #61c454; border: 1px solid #48a33c; }
.autosave {
  margin-left: 38px;
  font-size: 20px;
  width: 82px;
  white-space: nowrap;
  color: #f6e3dc;
}
.toggle {
  margin-left: 13px;
  width: 72px;
  height: 28px;
  border-radius: 14px;
  background: #743b2a;
  display: flex;
  align-items: center;
  box-shadow: inset 0 1px 2px rgba(0, 0, 0, 0.3);
}
.knob {
  width: 26px;
  height: 26px;
  border-radius: 50%;
  background: #fff;
  margin-left: 1px;
}
.toggle-text {
  font-size: 14px;
  margin-left: 6px;
  color: #f1d9d0;
}
.tb-home { margin-left: 27px; }
.tb-save { margin-left: 26px; }
.tb-undo { margin-left: 28px; }
.tb-undo-chev { margin-left: 17px; color: #d99b87; }
.tb-redo { margin-left: 21px; }
.tb-dots { margin-left: 25px; }
.tb-doc { margin-left: 720px; }
.doc-title {
  margin-left: 10px;
  font-size: 24px;
  font-weight: 500;
  white-space: nowrap;
  width: 237px;
}
.tb-title-chev { margin-left: 8px; color: #cf7d62; }
.tb-search { margin-left: auto; }
.tb-person { margin-left: 38px; }

/* tabs */
.tabs {
  flex: none;
  height: 56px;
  box-sizing: border-box;
  display: flex;
  align-items: center;
  padding-left: 22px;
  padding-right: 19px;
  padding-bottom: 2px;
  gap: 45px;
  background: #f7f7f7;
  font-size: 24.5px;
}
.tab {
  position: relative;
  white-space: nowrap;
}
.tab-active {
  font-weight: 500;
}
.tab-active::after {
  content: "";
  position: absolute;
  left: 0;
  right: 0;
  bottom: -9px;
  height: 6px;
  border-radius: 3px;
  background: #b3482b;
}
.tell {
  display: flex;
  align-items: center;
  gap: 19px;
  margin-left: -11px;
}
.tab-btn {
  width: 106px;
  height: 47px;
  box-sizing: border-box;
  border: 1.5px solid #d9d9d9;
  border-radius: 6px;
  background: #fff;
  color: #b3482b;
  font-weight: 500;
  font-size: 23px;
  display: flex;
  align-items: center;
  justify-content: center;
  gap: 9px;
  margin-top: 9px;
  margin-left: -25px;
}
.tab-btn-share {
  margin-left: auto;
}

/* ribbon */
.ribbon {
  flex: none;
  height: 156px;
  padding-top: 12px;
  padding-bottom: 16px;
  box-sizing: border-box;
  display: flex;
  background: linear-gradient(#f6f6f6, #efefef);
  border-bottom: 4px solid #d4d4d4;
}
.group {
  display: flex;
  flex: none;
  box-sizing: border-box;
  border-right: 2px solid #cdcdcd;
  height: 124px;
}
.group-clip { width: 297px; padding-left: 20px; }
.group-slides { width: 294px; padding-left: 6px; }
.group-font { width: 684px; flex-direction: column; padding-top: 10px; }
.group-para { width: 640px; }
.group-insert { width: 338px; padding-left: 17px; }
.group-draw { width: 418px; padding-left: 17px; }
.group-design { width: 200px; border-right: none; }

.big {
  display: grid;
  grid-template-rows: 78px auto;
  justify-items: center;
  font-size: 20px;
  line-height: 24px;
  color: #1c1c1c;
}
.big-icon {
  display: flex;
  align-items: center;
  gap: 14px;
}
.big-up .big-icon svg:first-child {
  margin-bottom: 12px;
}
.big-label {
  text-align: center;
  white-space: nowrap;
}
.big-paste { width: 104px; }
.big-paste .big-icon { gap: 10px; }
.big-paste .big-label { margin-right: 12px; }
.big-new { width: 116px; }
.big-smart { width: 102px; }
.big-w100 { width: 100px; }
.big-w96 { width: 96px; }
.big-w120 { width: 120px; }
.off-text { color: #9a9a9a; }

.rows {
  display: flex;
  flex-direction: column;
  margin-top: -2px;
  font-size: 19.5px;
  color: #1c1c1c;
}
.row {
  flex: none;
  height: 44px;
  display: flex;
  align-items: center;
  gap: 12px;
  white-space: nowrap;
}
.row > svg:first-child {
  width: 34px;
  flex: none;
}
.row-chev { margin-left: 2px; }
.rows-shape {
  margin-left: 14px;
  margin-top: 0;
  padding-top: 2px;
  color: #9a9a9a;
}
.rows-shape .row {
  height: 62px;
  gap: 9px;
}
.rows-shape .row > svg:first-child { width: 30px; }
.rows-shape .row-chev { margin-left: 3px; }
.chev {
  flex: none;
  color: #3a3a3a;
}
.chev.off,
.off .chev {
  color: #adadad;
}

.tool-row {
  height: 48px;
  display: flex;
  align-items: center;
  color: #bdbdbd;
}
.tool-row-2 {
  margin-top: 17px;
  height: 44px;
}
.select {
  box-sizing: border-box;
  height: 48px;
  background: #fff;
  border: 1.5px solid #dcdcdc;
  border-radius: 6px;
  display: flex;
  align-items: center;
  justify-content: flex-end;
  padding-right: 13px;
}
.select .chev { color: #777; }
.select-font { width: 342px; }
.select-size { width: 106px; }
.vsep {
  flex: none;
  width: 2px;
  height: 36px;
  background: #cfcfcf;
}
.glyph {
  flex: none;
  display: inline-flex;
  justify-content: center;
  align-items: center;
  position: relative;
  font-size: 24px;
  line-height: 1;
  white-space: nowrap;
}
.g18 { width: 18px; }
.g20 { width: 20px; }
.g22 { width: 22px; }
.g28 { width: 28px; }
.g32 { width: 32px; }
.g33 { width: 33px; }
.glyph .up {
  font-size: 16px;
  color: #b9d4ee;
  vertical-align: baseline;
  margin-left: 0;
  align-self: flex-start;
}
.bold { font-weight: 700; }
.italic { font-style: italic; font-weight: 300; }
.under { text-decoration: underline; }
.strike { text-decoration: line-through; }
.small { font-size: 17px; }
.latin {
  font-family: "Open Sans", sans-serif;
  font-size: 30px;
}
.latin sup,
.latin sub {
  font-size: 16px;
  color: #b9d4ee;
  line-height: 0;
}
.aa { font-size: 34px; }
.erase svg {
  position: absolute;
  right: -4px;
  bottom: -8px;
}
.spacing {
  flex-direction: column;
  font-size: 17px;
  gap: 2px;
}
.para-stack {
  width: 515px;
  padding-top: 10px;
}
.list-num {
  display: flex;
  width: 30px;
  gap: 1px;
  align-items: center;
}
.list-digits {
  font-size: 12px;
  line-height: 12px;
  color: #a9cbe8;
  width: 9px;
}
.text-dir {
  position: relative;
  width: 26px;
  height: 34px;
  display: block;
}
.text-dir-glyph {
  position: absolute;
  left: 10px;
  top: -4px;
  font-size: 18px;
  line-height: 20px;
  color: #b9d4ee;
}
.textbox-icon {
  position: relative;
  box-sizing: border-box;
  width: 58px;
  height: 48px;
  margin: 0 3px;
  border: 2.6px solid #3d3d3d;
  background: #fafafa;
  display: flex;
  align-items: center;
  justify-content: center;
  color: #4a90d0;
  font-size: 34px;
  font-weight: 300;
}
.hd {
  position: absolute;
  width: 8px;
  height: 8px;
  background: #4285c6;
}
.hd1 { left: -5px; top: -5px; }
.hd2 { right: -5px; top: -5px; }
.hd3 { left: -5px; bottom: -5px; }
.hd4 { right: -5px; bottom: -5px; }

/* workspace */
.workspace {
  flex: 1;
  min-height: 0;
  display: flex;
}
.sidebar {
  flex: none;
  width: 504px;
  box-sizing: border-box;
  background: #e3e4e6;
  border-right: 7px solid #ebebeb;
  overflow: hidden;
}
.thumbs {
  margin-top: -48px;
  display: flex;
  flex-direction: column;
  gap: 37.5px;
}
.thumb-item {
  display: flex;
  height: 221px;
}
.thumb-num {
  width: 63px;
  box-sizing: border-box;
  padding-left: 14px;
  font-family: "Liberation Sans", sans-serif;
  font-size: 26px;
  line-height: 30px;
  color: #444;
}

/* mini slides */
.mini {
  position: relative;
  width: 392px;
  height: 221px;
  box-sizing: border-box;
  background: #fff;
  border-radius: 10px;
  box-shadow: 0 0 0 1.5px #cfcfcf;
  display: grid;
  grid-template-columns: 288px 104px;
  grid-template-rows: 9px 212px;
  font-size: 7.2px;
  line-height: 7.2px;
  color: #111;
}
.mini-selected {
  box-shadow: 0 0 0 7px #a84d31;
}
.mini-head {
  grid-column: 1 / 3;
  background: #2a5ca8;
  border-radius: 10px 10px 0 0;
  color: #d5e2f2;
  font-size: 3.6px;
  line-height: 9px;
  display: flex;
  white-space: nowrap;
}
.mini-head span:nth-child(1) { margin-left: 99px; width: 30px; font-weight: 700; }
.mini-head span:nth-child(2) { width: 45px; }
.mini-head span:nth-child(3) { width: 18px; font-weight: 700; }
.mini-head span:nth-child(4) { width: 37px; }
.mini-head span:nth-child(5) { width: 27px; font-weight: 700; }
.mini-page {
  display: flex;
  flex-direction: column;
}
.mini-free {
  align-items: center;
}
.mini-nav {
  height: 11.5px;
  box-sizing: border-box;
  border: 0.6px solid #7fae55;
  display: flex;
  justify-content: space-between;
  align-items: center;
  padding: 0 11px 0 2px;
  font-size: 5.2px;
  white-space: nowrap;
  word-spacing: 1px;
}
.mini-body {
  flex: 1;
  display: flex;
  margin-left: 1px;
  border-bottom: 0.6px solid #7fae55;
}
.mini-left {
  width: 78px;
  box-sizing: border-box;
  border-left: 0.6px solid #7fae55;
  padding: 3px 0 0 3.5px;
  white-space: nowrap;
  word-spacing: 0.8px;
}
.mini-cats {
  margin: 0;
  padding-left: 13px;
  font-size: 4.4px;
  line-height: 6px;
}
.mini-center {
  width: 131px;
  box-sizing: border-box;
  border-left: 0.6px solid #7fae55;
  padding: 4px 2px 0;
  display: flex;
  flex-direction: column;
  gap: 3px;
}
.mini-card {
  display: block;
  width: 126px;
  box-sizing: border-box;
  background: #5070bc;
  border: 0.5px solid #3f5e9e;
}
.c1 { height: 42px; border-radius: 7px; }
.c2 { height: 62px; border-radius: 10px; }
.c3 { height: 50px; border-radius: 8px; }
.mini-right {
  width: 78px;
  box-sizing: border-box;
  border-left: 0.6px solid #7fae55;
  border-right: 0.6px solid #7fae55;
  display: flex;
  flex-direction: column;
  align-items: center;
}
.mini-board {
  margin-top: 30px;
  font-size: 7.6px;
  line-height: 9px;
  letter-spacing: 0.4px;
}
.mini-foot {
  margin-top: 127px;
  font-size: 7.6px;
  line-height: 9px;
}
.mini-foot-low {
  margin-top: 114px;
}
.dot {
  display: inline-block;
  width: 5px;
  height: 5px;
  box-sizing: border-box;
  border: 1px solid #e8392b;
  border-radius: 50%;
  background: #fff;
  vertical-align: -0.5px;
}
.mini-desc {
  color: #8a8a8a;
  font-size: 3.5px;
  line-height: 4.2px;
}
.mini-desc-head {
  height: 11px;
  margin-top: 0;
  background: #aed4fa;
  text-align: center;
  font-size: 4px;
  line-height: 11px;
  color: #7f7f7f;
}
.mini-row {
  display: flex;
  align-items: center;
  box-sizing: border-box;
  height: 19.5px;
}
.mini-row b {
  flex: none;
  width: 24px;
  text-align: center;
  font-weight: 400;
}
.mini-row span {
  padding-right: 3px;
}
.mini-row-tall { height: 58px; }
.mini-row-tall2 { height: 44px; }
.mini-row-pad { height: 72px; margin-top: 14px; }
.mini-row-pad2 { height: 20px; margin-top: 36px; }
.mini-row-pad3 { height: 44px; margin-top: 20px; }
.mini-row-short { height: 19px; }
.mini-row-line { border-top: 0.6px solid #888; }
.mini-desc-lined .mini-row {
  border-top: 0.6px solid #888;
  border-left: 0.6px solid #888;
}
.mini-desc-lined .mini-row:nth-child(2) { border-top: none; }
.mini-desc-open { border-left: 0.6px solid #aaa; height: 175px; }

/* mini: post card */
.post {
  position: relative;
  margin-top: 55px;
  width: 194px;
  height: 97px;
  box-sizing: border-box;
  border: 0.8px solid #111;
  display: flex;
  flex-direction: column;
}
.post-main {
  position: relative;
  flex: 1;
  padding: 6px 7px 0;
}
.post-count {
  position: absolute;
  right: 3px;
  top: 1px;
  font-size: 3px;
  line-height: 4px;
  color: #555;
}
.post-top {
  display: flex;
  align-items: center;
  gap: 12px;
}
.post-sample {
  width: 29px;
  height: 30px;
  box-sizing: border-box;
  border: 0.8px solid #111;
  border-radius: 4px;
  font-size: 5.4px;
  display: flex;
  align-items: center;
  justify-content: center;
}
.post-title {
  font-size: 7.6px;
  margin-top: -12px;
  white-space: nowrap;
  word-spacing: 1px;
}
.post-text {
  margin: 6px 3px 0;
  font-size: 4.8px;
  white-space: nowrap;
}
.post-meta {
  display: flex;
  justify-content: space-between;
  align-items: center;
  margin-top: 12px;
  margin-left: -2px;
  font-size: 4px;
}
.post-by {
  display: flex;
  align-items: center;
  gap: 3px;
  font-size: 2.8px;
  font-weight: 700;
}
.post-avatar {
  width: 9px;
  height: 9px;
  box-sizing: border-box;
  border: 0.7px solid #111;
  border-radius: 50%;
}
.post-bar {
  height: 17px;
  box-sizing: border-box;
  border-top: 0.8px solid #111;
  display: flex;
}
.post-heart {
  width: 19px;
  box-sizing: border-box;
  border-right: 0.8px solid #111;
  color: #4a6cb8;
  font-size: 12px;
  line-height: 15px;
  text-align: center;
}
.post-apply {
  flex: 1;
  display: flex;
  justify-content: center;
  align-items: center;
}
.post-apply span {
  width: 98px;
  height: 12px;
  background: #b987f0;
  text-align: center;
  font-size: 5.6px;
  line-height: 12px;
}
.pin {
  position: absolute;
  width: 10px;
  height: 6.500px;
  box-sizing: border-box;
  border: 0.6px solid #e8392b;
  border-radius: 50%;
  background: #fff;
  color: #e8392b;
  font-size: 4px;
  line-height: 5px;
  font-style: normal;
  text-align: center;
}
.pin1 { left: 0; top: -1px; }
.pin2 { left: 127px; top: 63px; }
.pin3 { left: -5px; top: 63px; }
.pin4 { left: -5px; top: 81px; }
.pin5 { left: 48px; top: 81px; }
.pin6 { right: -6px; top: 91px; }
.pin-board { right: -6px; bottom: -5px; }

/* mini: leaderboard */
.board {
  position: relative;
  margin-top: 25px;
  width: 160px;
  height: 116px;
  box-sizing: border-box;
  background: #5070bc;
  border: 0.6px solid #3f5e9e;
  color: #fff;
  padding: 4px 3px;
  font-size: 5.9px;
  line-height: 9.1px;
}
.board-title {
  text-align: center;
  white-space: nowrap;
  word-spacing: 1px;
}
.pin-static {
  display: inline-block;
  width: 10px;
  height: 7px;
  border-radius: 50%;
  background: #fff;
  border: 0.6px solid #e8392b;
  color: #e8392b;
  font-style: normal;
  font-size: 4px;
  line-height: 6px;
  text-align: center;
  margin-right: 1px;
}
.board-list {
  margin-top: 18px;
  display: grid;
  grid-template-columns: 118px auto;
  white-space: nowrap;
}
.board-foot {
  margin-top: 9px;
  font-size: 3.6px;
  text-align: right;
  padding-right: 8px;
  white-space: nowrap;
}

/* mini: profile + alerts */
.profile {
  width: 100%;
  height: 46px;
  box-sizing: border-box;
  background: #de8142;
  border-bottom: 0.5px solid #a05a28;
  font-size: 4.2px;
  line-height: 4.400px;
  padding: 3px 4px;
}
.profile-name {
  display: flex;
  align-items: center;
  gap: 5px;
  font-size: 6px;
  margin-bottom: 4px;
}
.profile-name i {
  width: 13px;
  height: 8px;
  border-radius: 50%;
  background: #5070bc;
}
.profile p {
  margin: 0 0 4px;
  font-weight: 500;
}
.alerts {
  width: 78px;
  height: 99px;
  box-sizing: border-box;
  background: #4465a8;
  padding: 2px 1px 7px 2px;
  display: flex;
  flex-direction: column;
  gap: 2px;
}
.alert {
  flex: 1;
  background: #e3e3e3;
  border-radius: 2px;
  display: flex;
  align-items: center;
  gap: 2px;
  padding: 0 1px 0 2px;
  font-size: 2.4px;
  line-height: 2.800px;
  overflow: hidden;
}
.alert i {
  flex: none;
  width: 11px;
  height: 8px;
  border-radius: 50%;
  background: #5070bc;
}

/* editor */
.editor {
  flex: 1;
  min-width: 0;
  display: flex;
  flex-direction: column;
  background: #e9e9e9;
}
.canvas {
  flex: 1;
  min-height: 0;
  padding: 41px 0 0 138px;
}
.notes {
  flex: none;
  height: 84px;
  box-sizing: border-box;
  border-top: 3px solid #d0d0d0;
  padding: 12px 0 0 14px;
  font-size: 27px;
  line-height: 36px;
  word-spacing: 7px;
}

/* slide */
.slide {
  width: 2242px;
  height: 1262px;
  background: #fff;
  display: grid;
  grid-template-columns: 1648px 594px;
  grid-template-rows: 55px 1fr;
  box-shadow: 0 0 8px rgba(0, 0, 0, 0.08);
}
.slide-head {
  grid-column: 1 / 3;
  background: #2a5ca8;
  color: #dde7f3;
  display: flex;
  align-items: center;
  font-family: "Open Sans", "Noto Sans CJK KR", sans-serif;
  font-size: 23px;
  white-space: nowrap;
}
.sh-title { margin-left: 565px; width: 165px; font-weight: 700; }
.sh-app { width: 263px; }
.sh-ver { width: 105px; font-weight: 700; }
.sh-vernum { width: 210px; }
.sh-page { width: 161px; font-weight: 700; font-size: 26px; }
.sh-pagename { font-size: 26.5px; word-spacing: 3px; }
.typo {
  text-decoration: underline wavy #e8392b 1.5px;
  text-underline-offset: 3px;
}
.page {
  display: flex;
  flex-direction: column;
  font-size: 30.5px;
  color: #111;
}
.page-nav {
  flex: none;
  height: 65px;
  box-sizing: border-box;
  border: 2px solid #7fae55;
  display: flex;
  justify-content: space-between;
  align-items: center;
  padding: 0 61px 2px 14px;
  white-space: nowrap;
}
.nav-left,
.nav-right {
  display: flex;
  align-items: center;
  white-space: pre;
}
.nav-right {
  font-size: 28.5px;
}
.page-body {
  flex: 1;
  display: flex;
  margin-left: 16px;
  margin-bottom: 1px;
  border-bottom: 2px solid #7fae55;
}
.col-left,
.col-center,
.col-right {
  box-sizing: border-box;
  border-left: 2px solid #7fae55;
}
.col-left {
  width: 444px;
  padding: 23px 0 0 15px;
  font-size: 34.6px;
  line-height: 39px;
  word-spacing: 4px;
  white-space: nowrap;
}
.col-center {
  width: 741px;
  padding: 25px 0 0 4px;
}
.col-right {
  width: 447px;
  border-right: 2px solid #7fae55;
  padding-top: 12px;
  display: flex;
  flex-direction: column;
  align-items: center;
  font-size: 46.5px;
  line-height: 60px;
}
.card {
  box-sizing: border-box;
  width: 714px;
  background: #5070bc;
  border: 2px solid #3f5e9e;
  display: flex;
  align-items: center;
  justify-content: center;
}
.card-1 { height: 234px; border-radius: 39px; }
.card-2 { height: 353px; border-radius: 59px; margin-top: 19px; }
.card-3 { height: 280px; border-radius: 47px; margin-top: 21px; margin-left: 2px; width: 712px; }
.board-label { margin-top: 95px; }
.foot-label { margin-top: 696px; }

/* circled numbers */
.mark {
  display: inline-flex;
  align-items: center;
  justify-content: center;
  box-sizing: border-box;
  border: 2px solid #e8392b;
  border-radius: 50%;
  color: #e8392b;
  font-family: "Open Sans", sans-serif;
  font-weight: 600;
  line-height: 1;
  text-shadow: 1px 2px 2px rgba(0, 0, 0, 0.25);
}
.mark-1 { width: 58px; height: 58px; font-size: 40px; background: #fff; margin-right: 34px; }
.mark-2 { width: 40px; height: 46px; font-size: 38px; }
.mark-3 { width: 36px; height: 34px; font-size: 30px; vertical-align: -5px; }
.mark-4 { width: 54px; height: 52px; font-size: 40px; align-self: flex-start; margin-left: 7px; }
.mark-5 { width: 45px; height: 42px; font-size: 38px; margin-left: 1px; margin-right: -3px; }
.mark-6 { width: 46px; height: 40px; font-size: 38px; margin-left: 8px; margin-right: -5px; }

/* description table */
.desc {
  padding-top: 4px;
  padding-left: 2px;
  font-family: "Open Sans", "Noto Sans CJK KR", sans-serif;
  color: #7f7f7f;
  font-size: 23px;
  line-height: 26px;
}
.desc-head {
  height: 66px;
  box-sizing: border-box;
  background: #aed4fa;
  border-bottom: 2px solid #7f8a95;
  text-align: center;
  font-size: 24px;
  line-height: 64px;
}
.desc-row {
  display: flex;
  height: 110.6px;
  box-sizing: border-box;
  border-bottom: 1.500px solid #7a7a7a;
  border-left: 1.500px solid #7a7a7a;
}
.desc-num {
  flex: none;
  width: 118.5px;
  box-sizing: border-box;
  border-right: 2px solid #bbb;
  display: flex;
  align-items: center;
  justify-content: center;
}
.desc-text {
  align-self: center;
  padding-left: 15px;
  padding-right: 14px;
}

/* status bar */
.status {
  flex: none;
  height: 39px;
  box-sizing: border-box;
  border-top: 2px solid #a0a0a0;
  background: linear-gradient(#e2e2e2, #cccccc);
  display: flex;
  align-items: center;
  padding-left: 49px;
  font-size: 22px;
  color: #555;
  white-space: nowrap;
}
.st-lang { margin-left: 43px; }
.st-access { margin-left: 40px; }
.st-check { margin-left: 9px; word-spacing: 2px; }
.st-right {
  margin-left: auto;
  display: flex;
  align-items: center;
  height: 100%;
  padding-right: 47px;
}
.st-right svg { flex: none; }
.st-memo { margin-left: 8px; }
.view-active {
  width: 74px;
  height: 100%;
  background: #a0a0a0;
  display: flex;
  align-items: center;
  justify-content: center;
}
.zoom-minus {
  width: 16px;
  height: 5px;
  background: #666;
}
.slider {
  position: relative;
  width: 200px;
  height: 8px;
  border-radius: 4px;
  background: #8f8f8f;
}
.slider-knob {
  position: absolute;
  left: 88px;
  top: -14px;
  width: 32px;
  height: 36px;
  border-radius: 50%;
  background: #f3f3f3;
}
.st-zoom {
  margin-left: 34px;
  width: 57px;
}
```
